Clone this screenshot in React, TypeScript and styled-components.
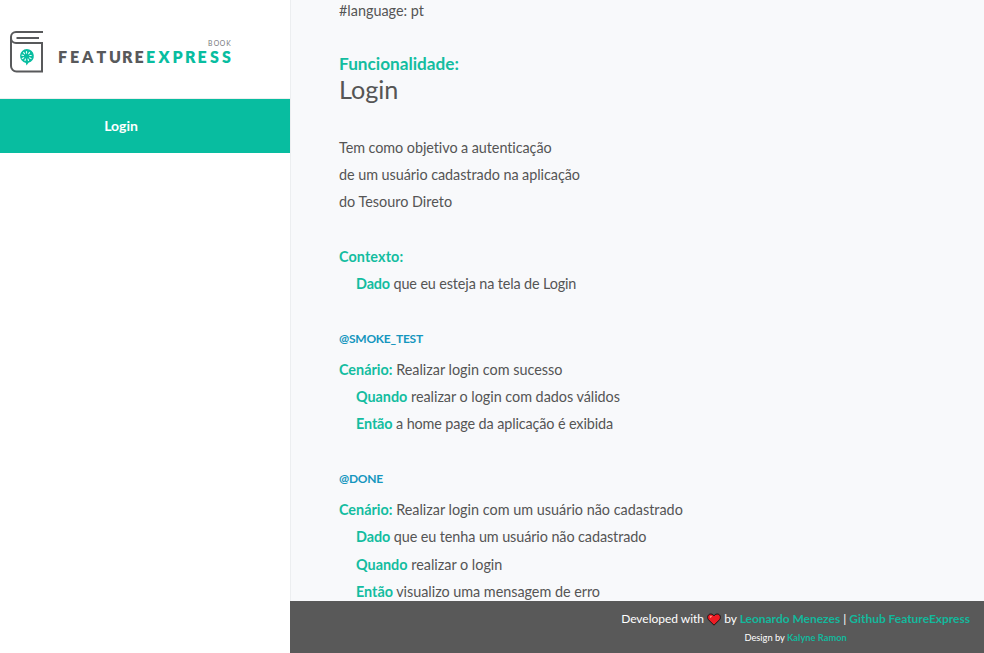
import React from "react";
import styled, { createGlobalStyle } from "styled-components";

const GlobalStyle = createGlobalStyle`
  * { box-sizing: border-box; }
  html, body { margin: 0; height: 100%; overflow: hidden; }
  body {
    font-family: Lato, "Open Sans", sans-serif;
    font-size: 14.4px;
    font-variant-ligatures: none;
    color: #555;
    background: #f8f9fb;
  }
`;

const Page = styled.div`
  display: grid;
  grid-template-columns: 290px 1fr;
  height: 100vh;
`;

const Sidebar = styled.aside`
  background: #fff;
  box-shadow: 1px 0 0 #eceef0;
`;

const LogoBox = styled.div`
  height: 99px;
  padding: 28px 0 0 6px;
  border-bottom: 1px solid #eee;
  svg { display: block; }
`;

const NavItem = styled.a`
  display: block;
  height: 54px;
  width: 290px;
  padding-right: 48px;
  line-height: 54px;
  text-align: center;
  font-size: 14px;
  font-weight: 700;
  color: #fff;
  background: #08bda0;
`;

const Main = styled.div`
  display: flex;
  flex-direction: column;
  min-width: 0;
  height: 100vh;
`;

const Content = styled.main`
  flex: 1;
  min-height: 0;
  overflow: hidden;
  padding-left: 49px;
`;

const Block = styled.section<{ $top?: number }>`
  margin-top: ${(p) => p.$top ?? 0}px;
`;

const Line = styled.p<{ $indent?: boolean; $tracking?: number }>`
  margin: 0;
  padding-left: ${(p) => (p.$indent ? 17 : 0)}px;
  line-height: 27.2px;
  letter-spacing: ${(p) => p.$tracking ?? 0}px;
  white-space: nowrap;
`;

const FirstLine = styled(Line)`
  margin-top: -3px;
`;

const Keyword = styled.b`
  color: #13bda0;
  font-weight: 700;
`;

const FeatureLabel = styled.div`
  color: #13bda0;
  font-size: 17.2px;
  font-weight: 700;
  line-height: 26px;
`;

const FeatureTitle = styled.h1`
  margin: 0;
  font-size: 25.2px;
  font-weight: 400;
  line-height: 25px;
`;

const Tag = styled.div`
  height: 31px;
  line-height: 27px;
  font-size: 12px;
  font-weight: 700;
  letter-spacing: -0.22px;
  color: #1596be;
`;

const Footer = styled.footer`
  display: flex;
  justify-content: flex-end;
  height: 52px;
  padding: 9px 14px 0 0;
  color: #fff;
  background: #595959;
`;

const Credits = styled.div`
  text-align: center;
`;

const Credit = styled.div<{ $small?: boolean }>`
  height: ${(p) => (p.$small ? 18 : 19)}px;
  line-height: 18px;
  font-size: ${(p) => (p.$small ? 9.3 : 12)}px;
  letter-spacing: ${(p) => (p.$small ? 0 : -0.02)}px;
  white-space: nowrap;
  svg { display: inline-block; vertical-align: -3px; }
`;

const Link = styled.a`
  font-weight: 700;
  color: #13b89c;
`;

const Logo = () => (
  <svg width="240" height="48" viewBox="6 28 240 48">
    <g fill="none" stroke="#58595b" strokeWidth="2">
      <path d="M43 32H16a5 5 0 0 0-5 5v29a5.500 5.500 0 0 0 5.500 5.500H42V43H16a5 5 0 0 1-5-5" />
      <path d="M16.500 38H39" />
    </g>
    <path d="M26.800 49a7 7 0 0 1 1.700 13.800l-2 2.800-.6-2.700A7 7 0 0 1 26.800 49z" fill="#08bda0" />
    <g stroke="#e8fffa" strokeWidth="1.200" strokeLinecap="round">
      <path d="M26.500 51.600v1.500M29.500 52.500l-.8 1.200M31.200 55.500h-1.400M31 58.500l-1.400-.7M28.500 60.500l-.5-1.400M25 60.500l.4-1.400M22.300 58.500l1.400-.8M22 55.200l1.500.3M23.700 52.500l.8 1.200" />
    </g>
    <g fontFamily="Lato, sans-serif" fontWeight="800" fontSize="16">
      <text x="58 70 82 96.500 109 122 134.500" y="62.600" fill="#58595b">FEATURE</text>
      <text x="146 158.500 172.500 185 197.500 210 222" y="62.600" fill="#08bda0">EXPRESS</text>
    </g>
    <text x="208 213.800 219.800 226.200" y="46" fontFamily="Lato, sans-serif" fontSize="6.800" fill="#77787a">BOOK</text>
  </svg>
);

const Heart = () => (
  <svg width="14" height="13" viewBox="0 0 14 13">
    <path d="M7 12.200 1.200 6.500C-.2 4 1 1 3.800 1 5.500 1 6.500 2 7 3c.5-1 1.500-2 3.200-2C13 1 14.200 4 12.800 6.500z" fill="#ed1c24" stroke="#161616" strokeWidth="1" />
    <path d="M3 4.500 4.500 3" stroke="#ff9a83" strokeWidth="1.300" />
  </svg>
);

const Step = ({ k, tracking, children }: { k: string; tracking?: number; children: React.ReactNode }) => (
  <Line $indent $tracking={tracking}><Keyword>{k}</Keyword> {children}</Line>
);

export default function App() {
  return (
    <Page>
      <GlobalStyle />
      <Sidebar>
        <LogoBox><Logo /></LogoBox>
        <NavItem>Login</NavItem>
      </Sidebar>
      <Main>
        <Content>
          <FirstLine>#language: pt</FirstLine>
          <Block $top={27}>
            <FeatureLabel>Funcionalidade:</FeatureLabel>
            <FeatureTitle>Login</FeatureTitle>
          </Block>
          <Block $top={31.6}>
            <Line $tracking={-0.07}>Tem como objetivo a autenticação</Line>
            <Line $tracking={-0.05}>de um usuário cadastrado na aplicação</Line>
            <Line>do Tesouro Direto</Line>
          </Block>
          <Block $top={27.6}>
            <Line $tracking={0.1}><Keyword>Contexto:</Keyword></Line>
            <Step k="Dado" tracking={-0.13}>que eu esteja na tela de Login</Step>
          </Block>
          <Block $top={27.6}>
            <Tag>@SMOKE_TEST</Tag>
            <Line><Keyword>Cenário:</Keyword> Realizar login com sucesso</Line>
            <Step k="Quando" tracking={-0.03}>realizar o login com dados válidos</Step>
            <Step k="Então" tracking={-0.12}>a home page da aplicação é exibida</Step>
          </Block>
          <Block $top={27.6}>
            <Tag>@DONE</Tag>
            <Line><Keyword>Cenário:</Keyword> Realizar login com um usuário não cadastrado</Line>
            <Step k="Dado" tracking={-0.09}>que eu tenha um usuário não cadastrado</Step>
            <Step k="Quando">realizar o login</Step>
            <Step k="Então" tracking={-0.03}>visualizo uma mensagem de erro</Step>
          </Block>
        </Content>
        <Footer>
          <Credits>
            <Credit>Developed with <Heart /> by <Link>Leonardo Menezes</Link> | <Link>Github FeatureExpress</Link></Credit>
            <Credit $small>Design by <Link>Kalyne Ramon</Link></Credit>
          </Credits>
        </Footer>
      </Main>
    </Page>
  );
}
